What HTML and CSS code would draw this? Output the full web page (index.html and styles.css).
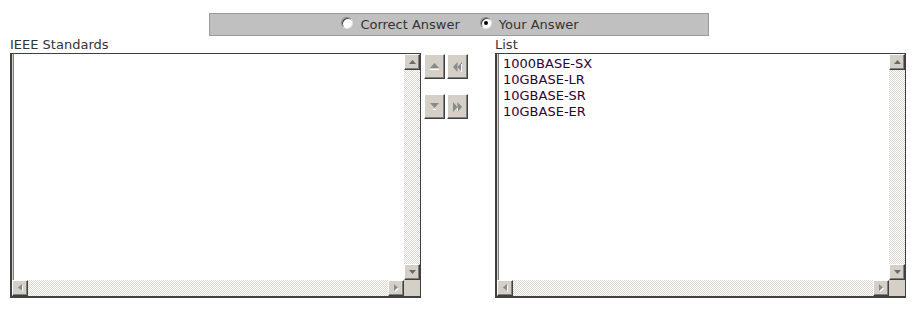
FILE: index.html
```html
<!DOCTYPE html>
<html lang="en">
<head>
  <meta charset="UTF-8" />
  <title>IEEE Standards</title>
  <link rel="stylesheet" href="styles.css">
</head>
<body>
  <div class="answer-bar">
    <label class="radio-opt"><span class="radio"></span>Correct Answer</label>
    <label class="radio-opt"><span class="radio checked"></span>Your Answer</label>
  </div>

  <div class="lists">
    <div class="list-col">
      <div class="list-label">IEEE Standards</div>
      <div class="listbox">
        <div class="list-items"></div>
        <div class="vscroll">
          <div class="sb-btn"><svg width="7" height="4" viewBox="0 0 7 4"><path d="M3.5 0 L7 4 L0 4 Z" fill="#6a6a6a"/></svg></div>
          <div class="sb-track"></div>
          <div class="sb-btn"><svg width="7" height="4" viewBox="0 0 7 4"><path d="M0 0 L7 0 L3.5 4 Z" fill="#6a6a6a"/></svg></div>
        </div>
        <div class="hscroll">
          <div class="sb-btn"><svg width="5" height="9" viewBox="0 0 5 9"><path d="M5 1 L1 4.5 L5 8 Z" fill="#fff"/><path d="M4 0 L0 3.5 L4 7 Z" fill="#8a8a8a"/></svg></div>
          <div class="sb-track"></div>
          <div class="sb-btn"><svg width="5" height="9" viewBox="0 0 5 9"><path d="M1 1 L5 4.5 L1 8 Z" fill="#fff"/><path d="M0 0 L4 3.5 L0 7 Z" fill="#8a8a8a"/></svg></div>
        </div>
        <div class="sb-corner"></div>
      </div>
    </div>

    <div class="mover">
      <div class="mover-row">
        <div class="mv-btn"><svg width="11" height="7" viewBox="0 0 11 7"><path d="M5.5 0 L10 5 L1 5 Z" fill="#8a8a8a"/><rect x="1" y="6" width="9" height="1" fill="#fff"/></svg></div>
        <div class="mv-btn"><svg width="9" height="10" viewBox="0 0 9 10"><path d="M4.5 0 L0 5 L4.5 10 Z" fill="#8a8a8a"/><path d="M9 0 L4.5 5 L9 10 Z" fill="#8a8a8a"/><rect x="8" y="2" width="1" height="8" fill="#fff"/></svg></div>
      </div>
      <div class="mover-row">
        <div class="mv-btn"><svg width="11" height="7" viewBox="0 0 11 7"><path d="M1 0 L10 0 L5.5 5 Z" fill="#8a8a8a"/><rect x="4" y="6" width="3" height="1" fill="#fff"/></svg></div>
        <div class="mv-btn"><svg width="9" height="10" viewBox="0 0 9 10"><path d="M0 0 L4.5 5 L0 10 Z" fill="#8a8a8a"/><path d="M4.5 0 L9 5 L4.5 10 Z" fill="#8a8a8a"/><rect x="4" y="6" width="1" height="3" fill="#fff"/></svg></div>
      </div>
    </div>

    <div class="list-col">
      <div class="list-label">List</div>
      <div class="listbox">
        <div class="list-items">
          <div class="list-item">1000BASE-SX</div>
          <div class="list-item">10GBASE-LR</div>
          <div class="list-item">10GBASE-SR</div>
          <div class="list-item">10GBASE-ER</div>
        </div>
        <div class="vscroll">
          <div class="sb-btn"><svg width="7" height="4" viewBox="0 0 7 4"><path d="M3.5 0 L7 4 L0 4 Z" fill="#6a6a6a"/></svg></div>
          <div class="sb-track"></div>
          <div class="sb-btn"><svg width="7" height="4" viewBox="0 0 7 4"><path d="M0 0 L7 0 L3.5 4 Z" fill="#6a6a6a"/></svg></div>
        </div>
        <div class="hscroll">
          <div class="sb-btn"><svg width="5" height="9" viewBox="0 0 5 9"><path d="M5 1 L1 4.5 L5 8 Z" fill="#fff"/><path d="M4 0 L0 3.5 L4 7 Z" fill="#8a8a8a"/></svg></div>
          <div class="sb-track"></div>
          <div class="sb-btn"><svg width="5" height="9" viewBox="0 0 5 9"><path d="M1 1 L5 4.5 L1 8 Z" fill="#fff"/><path d="M0 0 L4 3.5 L0 7 Z" fill="#8a8a8a"/></svg></div>
        </div>
        <div class="sb-corner"></div>
      </div>
    </div>
  </div>
</body>
</html>
```

FILE: styles.css
```css
body {
  margin: 0;
  padding: 13px 10px 0;
  background: #ffffff;
  font-family: "DejaVu Sans", Verdana, sans-serif;
  font-size: 13px;
  color: #333333;
}

.answer-bar {
  width: 500px;
  height: 23px;
  box-sizing: border-box;
  margin: 0 auto;
  background: #c0c0c0;
  border: 1px solid #9a9a9a;
  display: flex;
  justify-content: center;
  align-items: center;
  gap: 20px;
  padding-left: 2px;
}

.radio-opt {
  display: flex;
  align-items: center;
  gap: 7px;
  line-height: 15px;
}

.radio {
  width: 12px;
  height: 12px;
  box-sizing: border-box;
  border-radius: 50%;
  background: #ffffff;
  border: 1px solid #8a8a8a;
  border-bottom-color: #e0e0e0;
  border-right-color: #e0e0e0;
  box-shadow: inset 1px 1px 0 #404040;
  position: relative;
  margin-top: -3px;
}

.radio.checked::after {
  content: "";
  position: absolute;
  left: 3px;
  top: 3px;
  width: 4px;
  height: 4px;
  border-radius: 50%;
  background: #000000;
}

.lists {
  display: flex;
  align-items: flex-start;
}

.list-col {
  width: 411px;
  display: flex;
  flex-direction: column;
}

.list-label {
  height: 16px;
  line-height: 16px;
  margin-top: 1px;
}

.listbox {
  width: 411px;
  height: 245px;
  box-sizing: border-box;
  border: 1px solid #404040;
  border-left: 2px solid #404040;
  border-bottom-width: 2px;
  display: grid;
  grid-template-columns: 1fr 16px;
  grid-template-rows: 1fr 16px;
  background: #ffffff;
}

.list-items {
  border-left: 1px solid #d4d0c8;
  box-shadow: inset 1px 0 0 #808080;
  padding: 2px 0 0 5px;
  color: #300030;
}

.list-item {
  height: 16px;
  line-height: 16px;
}

.vscroll {
  display: flex;
  flex-direction: column;
}

.hscroll {
  display: flex;
}

.sb-track {
  flex: 1;
  background-color: #ffffff;
  background-image: conic-gradient(#dcd9d2 25%, #ffffff 0 50%, #dcd9d2 0 75%, #ffffff 0);
  background-size: 2px 2px;
}

.sb-btn,
.mv-btn {
  box-sizing: border-box;
  background: #d4d0c8;
  border: 1px solid;
  border-color: #ffffff #404040 #404040 #ffffff;
  box-shadow: inset -1px -1px 0 #808080;
  display: flex;
  align-items: center;
  justify-content: center;
}

.sb-btn {
  width: 16px;
  height: 16px;
}

.sb-corner {
  background: #d4d0c8;
}

.mover {
  width: 74px;
  padding: 18px 0 0 3px;
  box-sizing: border-box;
  display: flex;
  flex-direction: column;
  gap: 15px;
}

.mover-row {
  display: flex;
  gap: 2px;
}

.mv-btn {
  width: 21px;
  height: 25px;
}
```
